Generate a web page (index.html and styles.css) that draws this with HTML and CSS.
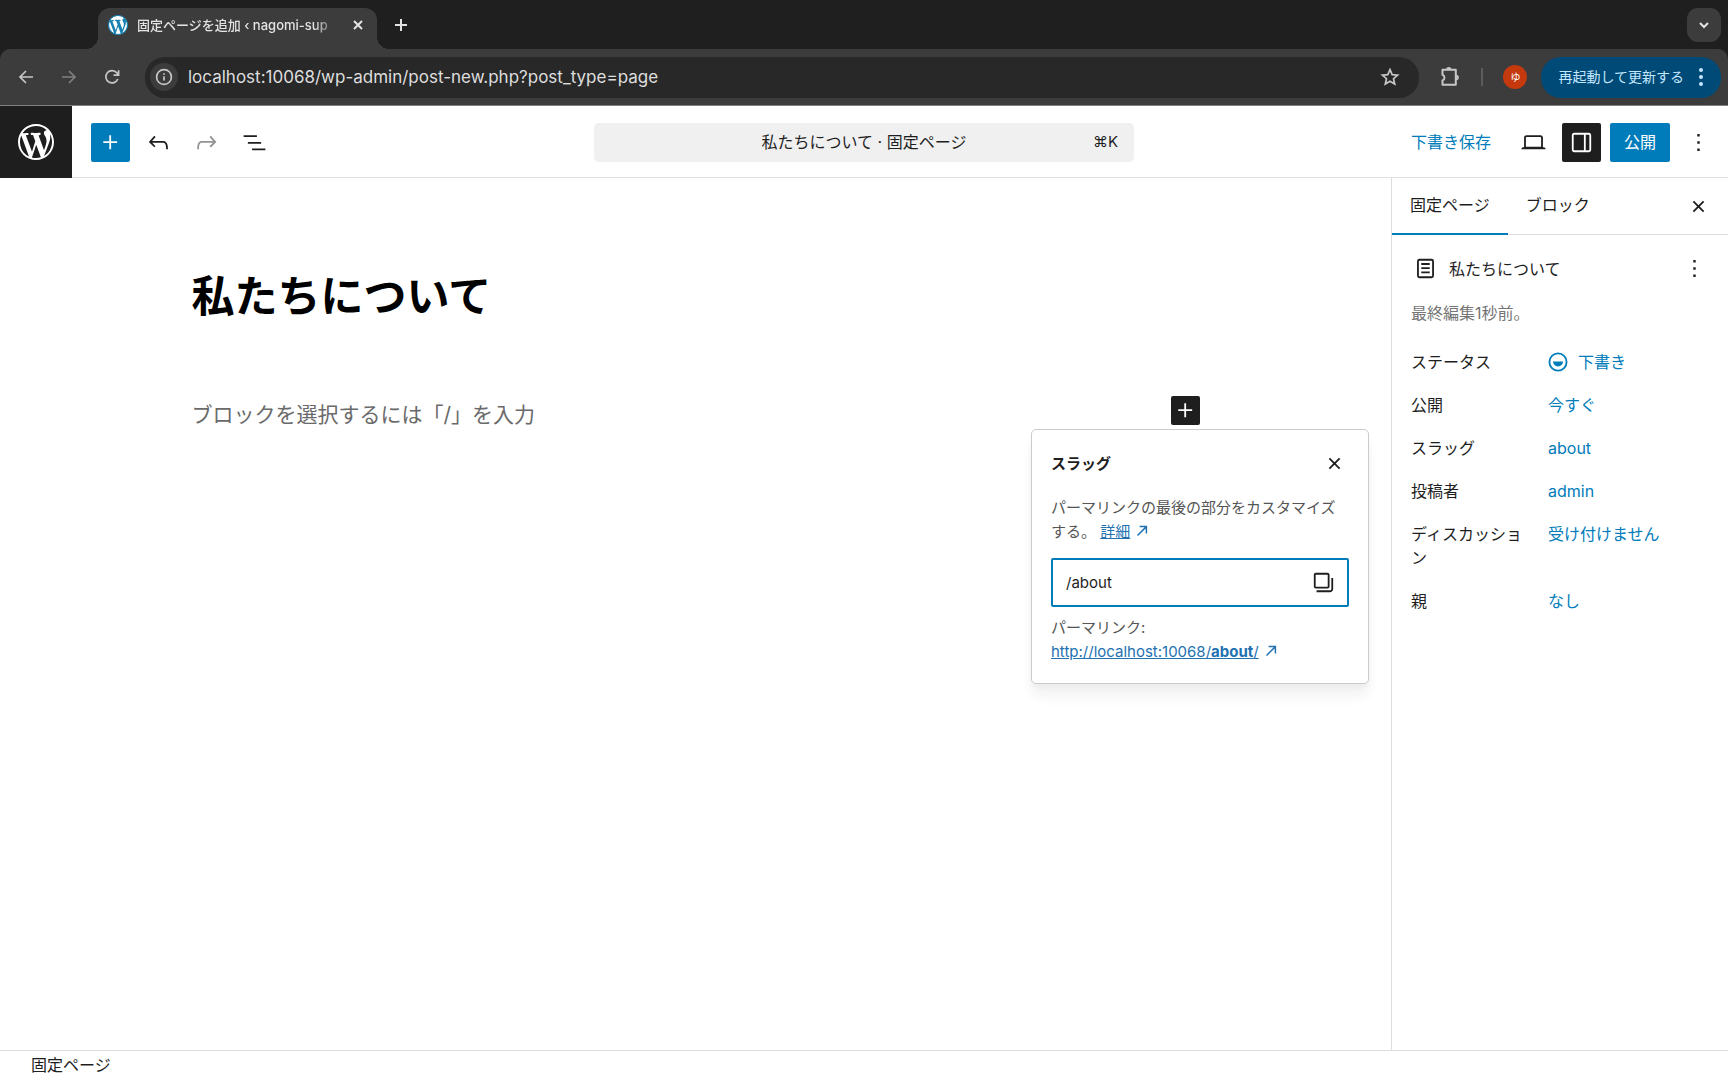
FILE: index.html
```html
<!DOCTYPE html>
<html lang="ja">

<head>
    <meta charset="UTF-8">
    <meta name="viewport" content="width=device-width, initial-scale=1.0">
    <title>固定ページを追加 ‹ nagomi-sup</title>
    <link rel="stylesheet" href="styles.css">
</head>

<body>

    <!-- Browser -->
    <div class="browser">
        <div class="tab-strip">
            <div class="browser-tab">
                <svg class="favicon" width="20" height="20" viewBox="0 0 20 20">
                    <circle cx="10" cy="10" r="9.6" fill="#fff" />
                    <path fill="#1681b0" d="M20 10c0-5.51-4.49-10-10-10C4.48 0 0 4.49 0 10c0 5.52 4.48 10 10 10 5.51 0 10-4.48 10-10zM7.78 15.37L4.37 6.22c.55-.02 1.17-.08 1.17-.08.5-.06.44-1.13-.06-1.11 0 0-1.45.11-2.37.11-.18 0-.37 0-.58-.01C4.12 2.69 6.87 1.11 10 1.11c2.33 0 4.45.87 6.05 2.34-.68-.11-1.65.39-1.65 1.58 0 .74.45 1.36.9 2.1.35.61.55 1.36.55 2.46 0 1.49-1.4 5-1.4 5l-3.03-8.37c.54-.02.82-.17.82-.17.5-.05.44-1.25-.06-1.22 0 0-1.44.12-2.38.12-.87 0-2.33-.12-2.33-.12-.5-.03-.56 1.2-.06 1.22l.92.08 1.26 3.41zM17.41 10c.24-.64.74-1.87.43-4.25.7 1.29 1.05 2.71 1.05 4.25 0 3.29-1.73 6.24-4.4 7.78.97-2.59 1.94-5.2 2.92-7.78zM6.1 18.09C3.12 16.65 1.11 13.53 1.11 10c0-1.3.23-2.48.72-3.59C3.25 10.3 4.67 14.2 6.1 18.09zm4.03-6.63l2.58 6.98c-.86.29-1.76.45-2.71.45-.79 0-1.57-.11-2.29-.33.81-2.38 1.62-4.74 2.42-7.1z" />
                </svg>
                <span class="tab-title">固定ページを追加 ‹ nagomi-sup</span>
                <button type="button" class="tab-close" aria-label="タブを閉じる">
                    <svg width="16" height="16" viewBox="0 0 16 16" class="line thick"><path d="M4 4l8 8M12 4l-8 8" /></svg>
                </button>
            </div>
            <button type="button" class="new-tab" aria-label="新しいタブ">
                <svg width="16" height="16" viewBox="0 0 16 16" class="line thick"><path d="M8 2v12M2 8h12" /></svg>
            </button>
            <button type="button" class="tab-search" aria-label="タブを検索">
                <svg width="16" height="16" viewBox="0 0 16 16" class="line thick"><path d="M4 6l4 4 4-4" /></svg>
            </button>
        </div>

        <div class="browser-bar">
            <button type="button" class="nav-button" aria-label="戻る">
                <svg width="20" height="20" viewBox="0 0 20 20" class="line"><path d="M17 10H4M10 4l-6 6 6 6" /></svg>
            </button>
            <button type="button" class="nav-button dim" aria-label="進む">
                <svg width="20" height="20" viewBox="0 0 20 20" class="line"><path d="M3 10h13M10 4l6 6-6 6" /></svg>
            </button>
            <button type="button" class="nav-button" aria-label="再読み込み">
                <svg width="20" height="20" viewBox="0 0 20 20" class="line"><path d="M15.8 12a6.2 6.2 0 1 1-1-6.2L16.5 8M16.6 3.2v5h-5" /></svg>
            </button>
            <div class="address">
                <button type="button" class="site-info" aria-label="サイト情報">
                    <svg width="18" height="18" viewBox="0 0 18 18" class="line"><circle cx="9" cy="9" r="7.4" /><path d="M9 8.2v4.4M9 5.2v1.6" /></svg>
                </button>
                <input type="text" aria-label="アドレス" value="localhost:10068/wp-admin/post-new.php?post_type=page">
                <button type="button" class="nav-button" aria-label="ブックマーク">
                    <svg width="20" height="20" viewBox="0 0 20 20" class="line"><path d="M10 2.6l2.2 5 5.4.5-4.1 3.6 1.2 5.3-4.7-2.8-4.7 2.8 1.2-5.3-4.1-3.6 5.4-.5z" /></svg>
                </button>
            </div>
            <button type="button" class="nav-button extensions" aria-label="拡張機能">
                <svg width="22" height="22" viewBox="0 0 22 22" class="line thick"><path d="M3.5 3.8h13.3v15H3.5v-4.4a2.9 2.9 0 0 0 0-5.5z" stroke-linejoin="round" /><path fill="currentColor" stroke="none" d="M7.2 3.6a2.6 2.6 0 0 1 5.2 0zM17.2 8.8a2.6 2.6 0 0 1 0 5.2z" /></svg>
            </button>
            <span class="bar-divider"></span>
            <button type="button" class="avatar">ゆ</button>
            <button type="button" class="update-button">
                <span>再起動して更新する</span>
                <svg width="6" height="20" viewBox="0 0 6 20" fill="currentColor"><circle cx="3" cy="3" r="2" /><circle cx="3" cy="10" r="2" /><circle cx="3" cy="17" r="2" /></svg>
            </button>
        </div>
    </div>

    <!-- Editor header -->
    <header class="editor-header">
        <a href="#" class="wp-logo" aria-label="固定ページ一覧">
            <svg width="36" height="36" viewBox="0 0 20 20"><path d="M20 10c0-5.51-4.49-10-10-10C4.48 0 0 4.49 0 10c0 5.52 4.48 10 10 10 5.51 0 10-4.48 10-10zM7.78 15.37L4.37 6.22c.55-.02 1.17-.08 1.17-.08.5-.06.44-1.13-.06-1.11 0 0-1.45.11-2.37.11-.18 0-.37 0-.58-.01C4.12 2.69 6.87 1.11 10 1.11c2.33 0 4.45.87 6.05 2.34-.68-.11-1.65.39-1.65 1.58 0 .74.45 1.36.9 2.1.35.61.55 1.36.55 2.46 0 1.49-1.4 5-1.4 5l-3.03-8.37c.54-.02.82-.17.82-.17.5-.05.44-1.25-.06-1.22 0 0-1.44.12-2.38.12-.87 0-2.33-.12-2.33-.12-.5-.03-.56 1.2-.06 1.22l.92.08 1.26 3.41zM17.41 10c.24-.64.74-1.87.43-4.25.7 1.29 1.05 2.71 1.05 4.25 0 3.29-1.73 6.24-4.4 7.78.97-2.59 1.94-5.2 2.92-7.78zM6.1 18.09C3.12 16.65 1.11 13.53 1.11 10c0-1.3.23-2.48.72-3.59C3.25 10.3 4.67 14.2 6.1 18.09zm4.03-6.63l2.58 6.98c-.86.29-1.76.45-2.71.45-.79 0-1.57-.11-2.29-.33.81-2.38 1.62-4.74 2.42-7.1z" /></svg>
        </a>
        <div class="header-left">
            <button type="button" class="icon-button primary" aria-label="ブロック挿入ツール">
                <svg class="icon" viewBox="0 0 24 24"><path d="M11 12.5V17.5H12.5V12.5H17.5V11H12.5V6H11V11H6V12.5H11Z" /></svg>
            </button>
            <button type="button" class="icon-button" aria-label="元に戻す">
                <svg class="icon" viewBox="0 0 24 24"><path d="M18.3 11.7c-.6-.6-1.4-.9-2.3-.9H6.7l2.9-3.3-1.1-1-4.5 5L8.5 16l1-1-2.7-2.7H16c.5 0 .9.2 1.3.5 1 1 1 3.4 1 4.5v.3h1.5v-.2c0-1.5 0-4.3-1.5-5.7z" /></svg>
            </button>
            <button type="button" class="icon-button faded" aria-label="やり直す">
                <svg class="icon" viewBox="0 0 24 24"><path d="M15.6 6.5l-1.1 1 2.9 3.3H8c-.9 0-1.7.3-2.3.9-1.4 1.5-1.4 4.2-1.4 5.6v.2h1.5v-.3c0-1.1 0-3.5 1-4.5.3-.3.7-.5 1.3-.5h9.2L14.5 15l1.1 1.1 4.6-4.6-4.6-5z" /></svg>
            </button>
            <button type="button" class="icon-button" aria-label="ドキュメント概観">
                <svg class="icon" viewBox="0 0 24 24"><path d="M3 6h11v1.5H3V6Zm3.5 5.5h11V13h-11v-1.5ZM21 17H10v1.5h11V17Z" /></svg>
            </button>
        </div>
        <button type="button" class="command-bar">
            <span class="command-title">私たちについて · 固定ページ</span>
            <span class="shortcut">⌘K</span>
        </button>
        <div class="header-right">
            <button type="button" class="text-button">下書き保存</button>
            <button type="button" class="icon-button" aria-label="表示">
                <svg class="icon" viewBox="0 0 24 24"><path d="M20.5 16h-.7V8c0-1.1-.9-2-2-2H6.2c-1.1 0-2 .9-2 2v8h-.7c-.8 0-1.5.7-1.5 1.5h20c0-.8-.7-1.5-1.5-1.5zM5.7 8c0-.3.2-.5.5-.5h11.6c.3 0 .5.2.5.5v7.6H5.7V8z" /></svg>
            </button>
            <button type="button" class="icon-button pressed" aria-label="設定">
                <svg class="icon" viewBox="0 0 24 24"><path d="M18 4H6c-1.1 0-2 .9-2 2v12c0 1.1.9 2 2 2h12c1.1 0 2-.9 2-2V6c0-1.1-.9-2-2-2zm-4 14.5H6c-.3 0-.5-.2-.5-.5V6c0-.3.2-.5.5-.5h8v13zm4.5-.5c0 .3-.2.5-.5.5h-2.5v-13H18c.3 0 .5.2.5.5v12z" /></svg>
            </button>
            <button type="button" class="publish-button">公開</button>
            <button type="button" class="icon-button" aria-label="オプション">
                <svg class="icon" viewBox="0 0 24 24"><path d="M13 19h-2v-2h2v2zm0-6h-2v-2h2v2zm0-6h-2V5h2v2z" /></svg>
            </button>
        </div>
    </header>

    <div class="editor-body">
        <main class="canvas">
            <h1 class="post-title">私たちについて</h1>
            <div class="appender">
                <p>ブロックを選択するには「/」を入力</p>
                <button type="button" class="add-block" aria-label="ブロックを追加">
                    <svg class="icon" viewBox="0 0 24 24"><path d="M11 12.5V17.5H12.5V12.5H17.5V11H12.5V6H11V11H6V12.5H11Z" /></svg>
                </button>
            </div>
        </main>

        <aside class="sidebar">
            <div class="sidebar-tabs">
                <button type="button" class="sidebar-tab active">固定ページ</button>
                <button type="button" class="sidebar-tab">ブロック</button>
                <button type="button" class="icon-button" aria-label="設定を閉じる">
                    <svg class="icon" viewBox="0 0 24 24"><path d="M12 13.06l3.712 3.713 1.061-1.06L13.061 12l3.712-3.712-1.06-1.06L12 10.938 8.288 7.227l-1.061 1.06L10.939 12l-3.712 3.712 1.06 1.061L12 13.061z" /></svg>
                </button>
            </div>
            <div class="summary">
                <div class="summary-head">
                    <svg class="icon" viewBox="0 0 24 24"><path d="M15.5 7.5h-7V9h7V7.5Zm-7 3.5h7v1.5h-7V11Zm7 3.5h-7V16h7v-1.5Z" /><path fill-rule="evenodd" d="M17 4H7a2 2 0 0 0-2 2v12a2 2 0 0 0 2 2h10a2 2 0 0 0 2-2V6a2 2 0 0 0-2-2ZM7 5.5h10a.5.5 0 0 1 .5.5v12a.5.5 0 0 1-.5.5H7a.5.5 0 0 1-.5-.5V6a.5.5 0 0 1 .5-.5Z" /></svg>
                    <h2>私たちについて</h2>
                    <button type="button" class="icon-button small" aria-label="操作">
                        <svg class="icon" viewBox="0 0 24 24"><path d="M13 19h-2v-2h2v2zm0-6h-2v-2h2v2zm0-6h-2V5h2v2z" /></svg>
                    </button>
                </div>
                <p class="last-edited">最終編集1秒前。</p>
                <dl class="rows">
                    <div class="row">
                        <dt>ステータス</dt>
                        <dd>
                            <button type="button">
                                <svg width="20" height="20" viewBox="0 0 20 20"><circle cx="10" cy="10" r="8.6" fill="none" stroke="currentColor" stroke-width="1.8" /><path fill="currentColor" d="M5 9.4h10a5 5 0 0 1-10 0z" /></svg>
                                下書き
                            </button>
                        </dd>
                    </div>
                    <div class="row">
                        <dt>公開</dt>
                        <dd><button type="button">今すぐ</button></dd>
                    </div>
                    <div class="row">
                        <dt>スラッグ</dt>
                        <dd><button type="button">about</button></dd>
                    </div>
                    <div class="row">
                        <dt>投稿者</dt>
                        <dd><button type="button">admin</button></dd>
                    </div>
                    <div class="row">
                        <dt>ディスカッション</dt>
                        <dd><button type="button">受け付けません</button></dd>
                    </div>
                    <div class="row">
                        <dt>親</dt>
                        <dd><button type="button">なし</button></dd>
                    </div>
                </dl>
            </div>

            <div class="popover">
                <div class="popover-head">
                    <h2>スラッグ</h2>
                    <button type="button" class="icon-button small" aria-label="閉じる">
                        <svg class="icon" viewBox="0 0 24 24"><path d="M12 13.06l3.712 3.713 1.061-1.06L13.061 12l3.712-3.712-1.06-1.06L12 10.938 8.288 7.227l-1.061 1.06L10.939 12l-3.712 3.712 1.06 1.061L12 13.061z" /></svg>
                    </button>
                </div>
                <p><label for="slug">パーマリンクの最後の部分をカスタマイズ<br>する。</label> <a href="#">詳細</a><svg class="external" width="12" height="12" viewBox="0 0 12 12"><path d="M1.5 10.5l8.6-8.6M3.6 1.6h6.8v6.8" /></svg></p>
                <div class="slug-field">
                    <input type="text" id="slug" value="/about">
                    <button type="button" aria-label="コピー">
                        <svg class="icon" viewBox="0 0 24 24"><path fill-rule="evenodd" d="M5.625 5.5h9.75c.069 0 .125.056.125.125v9.75a.125.125 0 0 1-.125.125h-9.75a.125.125 0 0 1-.125-.125v-9.75c0-.069.056-.125.125-.125ZM4 5.625C4 4.728 4.728 4 5.625 4h9.75C16.273 4 17 4.728 17 5.625v9.75c0 .898-.727 1.625-1.625 1.625h-9.75A1.625 1.625 0 0 1 4 15.375v-9.75Zm14.5 11.656v-9H20v9C20 18.8 18.77 20 17.251 20H6.25v-1.5h11.001c.69 0 1.249-.528 1.249-1.219Z" /></svg>
                    </button>
                </div>
                <p>パーマリンク:<br><a href="#">http://localhost:10068/<b>about</b>/</a><svg class="external" width="12" height="12" viewBox="0 0 12 12"><path d="M1.5 10.5l8.6-8.6M3.6 1.6h6.8v6.8" /></svg></p>
            </div>
        </aside>
    </div>

    <footer class="breadcrumb">固定ページ</footer>

</body>

</html>
```
FILE: styles.css
```css
* {
    box-sizing: border-box;
}

body {
    font-family: Inter, "Noto Sans CJK JP", sans-serif;
    font-size: 16px;
    line-height: 24px;
    margin: 0;
    color: #1e1e1e;
    background-color: #fff;
    display: flex;
    flex-direction: column;
    min-height: 100vh;
}

button,
input {
    font: inherit;
    color: inherit;
}

button {
    display: flex;
    align-items: center;
    justify-content: center;
    padding: 0;
    border: none;
    background: none;
    white-space: nowrap;
    cursor: pointer;
}

h1,
h2,
p,
dl,
dd {
    margin: 0;
}

.line {
    fill: none;
    stroke: currentColor;
    stroke-width: 1.7;
}

.thick {
    stroke-width: 2;
}

.icon {
    width: 29px;
    height: 29px;
    fill: currentColor;
    flex: none;
}

/* Browser */
.browser {
    background-color: #1f1f1f;
}

.tab-strip {
    display: flex;
    align-items: center;
    height: 49px;
    padding: 0 7px 0 98px;
    color: #e3e3e3;
}

.browser-tab {
    position: relative;
    display: flex;
    align-items: center;
    align-self: flex-end;
    width: 279px;
    height: 41px;
    padding: 0 11px 8px 10px;
    border-radius: 12px 12px 0 0;
    background-color: #3c3c3c;
}

/* curved feet of the active tab */
.browser-tab::before,
.browser-tab::after {
    content: "";
    position: absolute;
    bottom: 0;
    width: 12px;
    height: 12px;
}

.browser-tab::before {
    right: 100%;
    background: radial-gradient(circle at 0 0, transparent 12px, #3c3c3c 12px);
}

.browser-tab::after {
    left: 100%;
    background: radial-gradient(circle at 100% 0, transparent 12px, #3c3c3c 12px);
}

.favicon {
    flex: none;
}

.tab-title {
    flex: 1;
    margin: 0 12px 0 9px;
    font-size: 13px;
    font-weight: 500;
    white-space: nowrap;
    -webkit-mask-image: linear-gradient(to right, #000 88%, transparent);
    mask-image: linear-gradient(to right, #000 88%, transparent);
}

.new-tab {
    margin-left: 16px;
}

.tab-search {
    width: 34px;
    height: 34px;
    margin-left: auto;
    border-radius: 11px;
    background-color: #3c3c3c;
}

.browser-bar {
    display: flex;
    align-items: center;
    height: 57px;
    padding: 0 7px 0 16px;
    border-bottom: 1px solid #808080;
    border-radius: 10px 10px 0 0;
    background-color: #3c3c3c;
    color: #c7c7c7;
}

.nav-button {
    width: 20px;
    height: 20px;
    margin-right: 23px;
}

.nav-button.dim {
    color: #808080;
}

.address {
    flex: 1;
    display: flex;
    align-items: center;
    height: 41px;
    padding: 0 19px 0 5px;
    border-radius: 20px;
    background-color: #282828;
}

.address .nav-button {
    margin-right: 0;
}

.site-info {
    width: 28px;
    height: 28px;
    border-radius: 50%;
    background-color: #3c3c3c;
}

.address input {
    flex: 1;
    min-width: 0;
    padding: 0 10px;
    border: none;
    outline: none;
    background: none;
    color: #dedede;
    font-size: 17px;
}

.extensions {
    width: 22px;
    height: 22px;
    margin: 0 20px;
}

.bar-divider {
    width: 2px;
    height: 18px;
    background-color: #5c5c5c;
}

.avatar {
    width: 24px;
    height: 24px;
    margin: 0 14px 0 20px;
    border-radius: 50%;
    background-color: #c5390e;
    color: #fff;
    font-size: 10px;
}

.update-button {
    gap: 14px;
    height: 41px;
    padding: 0 17px;
    border-radius: 20px;
    background-color: #004a77;
    color: #c2e7ff;
    font-size: 14px;
}

/* Editor header */
.editor-header {
    display: grid;
    grid-template-columns: auto 1fr minmax(0, 540px) 1fr;
    align-items: center;
    height: 72px;
    border-bottom: 1px solid #e0e0e0;
}

.wp-logo {
    display: flex;
    align-items: center;
    justify-content: center;
    width: 72px;
    height: 72px;
    margin-right: -72px;
    background-color: #1e1e1e;
    fill: #fff;
}

.header-left {
    display: flex;
    gap: 9px;
    padding-left: 91px;
}

.header-right {
    display: flex;
    align-items: center;
    justify-content: flex-end;
    gap: 9px;
    padding-right: 10px;
}

.icon-button {
    width: 39px;
    height: 39px;
    border-radius: 2px;
}

.icon-button.small {
    width: 29px;
    height: 29px;
}

.primary {
    background-color: #007cba;
    color: #fff;
}

.faded {
    color: #949494;
}

.pressed {
    background-color: #1e1e1e;
    color: #fff;
}

.command-bar {
    display: grid;
    grid-template-columns: 1fr auto 1fr;
    height: 39px;
    padding: 0 16px;
    border-radius: 5px;
    background-color: #f0f0f0;
}

.command-title {
    grid-column: 2;
}

.shortcut {
    justify-self: end;
    font-size: 15px;
}

.text-button {
    margin-right: 14px;
    color: #007cba;
}

.publish-button {
    width: 60px;
    height: 39px;
    border-radius: 2px;
    background-color: #007cba;
    color: #fff;
}

/* Canvas */
.editor-body {
    flex: 1;
    display: flex;
}

.canvas {
    flex: 1;
    min-width: 0;
    padding: 92px 24px 0;
}

.post-title,
.appender {
    max-width: 1008px;
    margin: 0 auto;
}

.post-title {
    font-size: 43px;
    line-height: 52px;
    color: #000;
}

.appender {
    display: flex;
    align-items: flex-start;
    justify-content: space-between;
    margin-top: 74px;
}

.appender p {
    padding-top: 3px;
    font-size: 21px;
    line-height: 32px;
    color: #6a6a6a;
}

.add-block {
    width: 29px;
    height: 29px;
    border-radius: 2px;
    background-color: #1e1e1e;
    color: #fff;
}

/* Sidebar */
.sidebar {
    position: relative;
    width: 337px;
    border-left: 1px solid #ddd;
}

.sidebar-tabs {
    display: flex;
    align-items: center;
    height: 57px;
    padding-right: 10px;
    border-bottom: 1px solid #ddd;
}

.sidebar-tab {
    height: 57px;
    padding: 0 18px;
    border-bottom: 2px solid transparent;
}

.sidebar-tab.active {
    border-color: #007cba;
}

.sidebar-tabs .icon-button {
    margin-left: auto;
}

.summary {
    padding: 19px;
}

.summary-head {
    display: flex;
    align-items: center;
    gap: 9px;
}

.summary-head h2 {
    flex: 1;
    font-size: 16px;
    font-weight: 400;
}

.last-edited {
    margin: 18px 0;
    color: #757575;
}

.rows {
    display: flex;
    flex-direction: column;
    gap: 5px;
}

.row {
    display: grid;
    grid-template-columns: 113px 1fr;
    gap: 24px;
    align-items: start;
}

.row dt,
.row dd {
    padding: 7px 0;
}

.row dd button {
    gap: 10px;
    color: #007cba;
}

/* Slug popover */
.popover {
    position: absolute;
    top: 251px;
    right: calc(100% + 23px);
    width: 338px;
    padding: 19px;
    border: 1px solid #ccc;
    border-radius: 5px;
    background-color: #fff;
    box-shadow: 0 4px 5px rgba(0, 0, 0, 0.03), 0 12px 12px rgba(0, 0, 0, 0.03), 0 16px 16px rgba(0, 0, 0, 0.02);
    font-size: 15px;
}

.popover-head {
    display: flex;
    align-items: center;
    justify-content: space-between;
    margin-bottom: 18px;
}

.popover-head h2 {
    font-size: 15px;
}

.popover p {
    color: #555;
}

.popover a {
    color: #2271b1;
}

.external {
    margin-left: 6px;
    fill: none;
    stroke: #2271b1;
    stroke-width: 1.5;
}

.slug-field {
    display: flex;
    align-items: center;
    height: 49px;
    margin: 14px 0 9px;
    padding: 0 9px 0 13px;
    border: 2px solid #007cba;
    border-radius: 2px;
}

.slug-field input {
    flex: 1;
    min-width: 0;
    padding: 0;
    border: none;
    outline: none;
}

.breadcrumb {
    height: 30px;
    padding: 2px 31px;
    border-top: 1px solid #ddd;
}
```
